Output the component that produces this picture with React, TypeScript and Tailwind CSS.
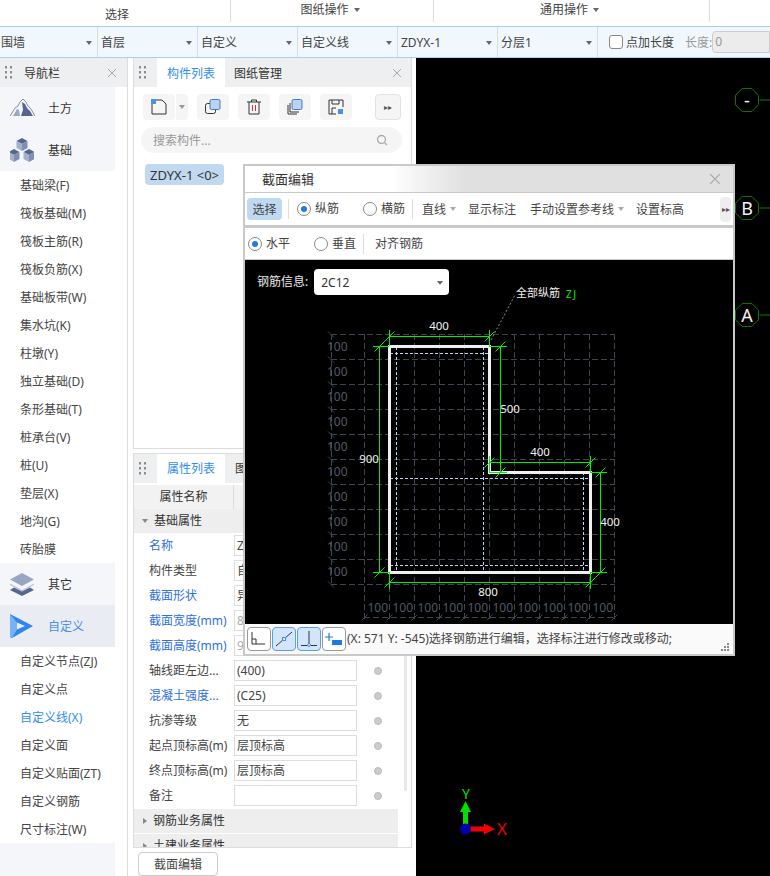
import type { ReactNode } from "react";

const selects = ["围墙", "首层", "自定义", "自定义线", "ZDYX-1", "分层1"];
const groupOne = ["基础梁(F)", "筏板基础(M)", "筏板主筋(R)", "筏板负筋(X)", "基础板带(W)", "集水坑(K)", "柱墩(Y)", "独立基础(D)", "条形基础(T)", "桩承台(V)", "桩(U)", "垫层(X)", "地沟(G)", "砖胎膜"];
const groupTwo = ["自定义节点(ZJ)", "自定义点", "自定义线(X)", "自定义面", "自定义贴面(ZT)", "自定义钢筋", "尺寸标注(W)"];
const props = [
  { name: "名称", value: "ZDYX-1", blue: true },
  { name: "构件类型", value: "自定义线" },
  { name: "截面形状", value: "异形", blue: true },
  { name: "截面宽度(mm)", value: "800", blue: true, muted: true },
  { name: "截面高度(mm)", value: "900", blue: true, muted: true },
  { name: "轴线距左边...", value: "(400)" },
  { name: "混凝土强度...", value: "(C25)", blue: true },
  { name: "抗渗等级", value: "无" },
  { name: "起点顶标高(m)", value: "层顶标高" },
  { name: "终点顶标高(m)", value: "层顶标高" },
  { name: "备注", value: "" },
];

function Caret({ className = "" }: { className?: string }) {
  return <span className={`inline-block h-0 w-0 border-x-[3.5px] border-t-[4px] border-x-transparent border-t-[#666] ${className}`} />;
}

function Grip() {
  return (
    <svg width="8" height="14" viewBox="0 0 8 14" fill="#8d8d8d">
      {[0, 5, 10].map((y) => (
        <g key={y}>
          <rect x="0" y={y} width="2" height="2.5" />
          <rect x="5" y={y} width="2" height="2.5" />
        </g>
      ))}
    </svg>
  );
}

function CloseX({ size = 10 }: { size?: number }) {
  return (
    <svg width={size} height={size} viewBox="0 0 10 10" stroke="#a8a8a8" strokeWidth="1">
      <path d="M1 1l8 8M9 1l-8 8" />
    </svg>
  );
}

function Radio({ label, on, className = "" }: { label: string; on?: boolean; className?: string }) {
  return (
    <span className={`flex items-center gap-1 ${className}`}>
      <span className="flex h-3.5 w-3.5 items-center justify-center rounded-full border border-[#8a8a8a] bg-white">
        {on ? <span className="h-1.5 w-1.5 rounded-full bg-[#1f7ae0]" /> : null}
      </span>
      <span>{label}</span>
    </span>
  );
}

function ToolButton({ children, className = "" }: { children: ReactNode; className?: string }) {
  return <span className={`flex h-[26px] w-8 items-center justify-center rounded bg-[#f5f5f5] ${className}`}>{children}</span>;
}

function NavHead({ icon, label, active }: { icon: ReactNode; label: string; active?: boolean }) {
  return (
    <div className={`flex h-[42px] w-[115px] items-center pl-2.5 ${active ? "bg-[#e9ecf3] text-[#4a90e8]" : "bg-[#f5f6fa] text-[#333]"}`}>
      <span className="flex w-[38px]">{icon}</span>
      <span className="pt-0.5">{label}</span>
    </div>
  );
}

function NavItem({ label, active }: { label: string; active?: boolean }) {
  return <div className={`flex h-7 items-center pl-5 pt-0.5 ${active ? "text-[#2f8ef0]" : "text-[#444]"}`}>{label}</div>;
}

function Mountain() {
  return (
    <svg width="25" height="18" viewBox="0 0 25 18">
      <path d="M0 17L5 9l3-2 2-4 3-3 3 3 2 4 3 3 4 7" fill="none" stroke="#7f8fb0" strokeWidth="1" />
      <path d="M12 3l3 2 2 4 3 3 3 5H11l2-6z" fill="#55678f" />
      <path d="M3 17l4-7 2 1 1 6z" fill="#9aa8c6" />
    </svg>
  );
}

function Cubes() {
  return (
    <svg width="24" height="24" viewBox="0 0 24 24">
      {[[12, 0], [4, 11], [19, 11]].map(([x, y]) => (
        <g key={`${x}-${y}`} transform={`translate(${x - 5.5} ${y})`}>
          <path d="M0 3l5.5-3L11 3 5.500 6z" fill="#55678f" />
          <path d="M0 3l5.500 3v7L0 10z" fill="#a4b1cd" />
          <path d="M11 3L5.500 6v7L11 10z" fill="#7e8fb3" />
        </g>
      ))}
    </svg>
  );
}

function Layers() {
  return (
    <svg width="24" height="23" viewBox="0 0 24 23">
      <path d="M12 0l12 6.500L12 13 0 6.500z" fill="#98a6c6" />
      <path d="M0 10.500L12 17l12-6.500V12l-12 6.500L0 12z" fill="#bcc6da" />
      <path d="M4 14.500l8 4 8-4 4 2.500-12 6-12-6z" fill="#55678f" />
    </svg>
  );
}

function PlayLogo() {
  return (
    <svg width="24" height="24" viewBox="0 0 24 24">
      <path d="M0 0l23 12L2 24l-2-1z" fill="#2f86ee" />
      <path d="M7 8.500v7l8-3.500z" fill="#e9ecf3" />
      <path d="M0 0l7 8.500v7L2 24l-2-1z" fill="#76b2f5" />
    </svg>
  );
}

function SectionDrawing() {
  const rows = Array.from({ length: 11 }, (_, i) => 334.5 + i * 25);
  const cols = Array.from({ length: 11 }, (_, i) => 364.5 + i * 25);
  const ticks: [number, number][] = [
    [389.5, 336.5], [489.5, 336.5], [379.5, 346.5], [379.5, 572.5], [500.5, 346.5], [500.5, 472.5],
    [489.5, 462.5], [590.5, 462.5], [600.5, 472.5], [600.5, 572.5], [389.5, 582.5], [590.5, 582.5],
  ];
  const green = [
    "M389.5 336.5H489.5", "M379.5 346.5V572.5", "M500.5 346.5V472.5", "M489.5 462.5H590.5", "M600.5 472.5V572.5", "M389.5 582.5H590.5",
    "M389.5 330V346", "M489.5 330V346", "M373 346.5H389", "M373 572.5H389", "M489 346.5H507", "M489.5 456V472", "M590.5 456V472",
    "M489 472.5H507", "M590 472.5H607", "M590 572.5H607", "M389.5 572V589", "M590.5 572V589",
  ];
  const dims: [string, number, number][] = [
    ["400", 439, 330], ["500", 510, 413], ["900", 369, 463], ["400", 540, 456], ["400", 610, 526], ["800", 488, 596],
  ];
  return (
    <svg className="absolute inset-0" width="488" height="364" viewBox="245 260 488 364">
      <g stroke="#3f4653" strokeWidth="1" strokeDasharray="6 3" fill="none">
        {rows.map((y) => <path key={y} d={`M331 ${y}H615`} />)}
        {cols.map((x) => <path key={x} d={`M${x} 334V620`} />)}
        <path d="M331.5 334V584" />
        <path d="M364 617.5H615" />
      </g>
      <g stroke="#3f4653" strokeWidth="1">
        {rows.map((y) => <path key={y} d={`M328 ${y - 3}l6 6`} />)}
        {cols.map((x) => <path key={x} d={`M${x - 3} 620.5l6-6`} />)}
      </g>
      <g fill="#535a66" fontSize="12">
        {rows.slice(0, 10).map((y) => <text key={y} x="327" y={y + 16.5}>100</text>)}
        {cols.slice(0, 10).map((x) => <text key={x} x={x + 3} y="612">100</text>)}
      </g>
      <g stroke="#bcd6f5" strokeWidth="1" strokeDasharray="3 2" fill="none">
        <path d="M396.5 347V572M483.5 347V572M583.5 472V572M390 353.5H489M390 478.5H590M390 565.5H590" />
      </g>
      <path d="M389.5 346.5H489.5V472.5H590.5V572.5H389.5Z" fill="none" stroke="#f0f0f0" strokeWidth="3" />
      <g stroke="#00f000" strokeWidth="1" fill="none">
        {green.map((d) => <path key={d} d={d} />)}
        {ticks.map(([x, y]) => <path key={`${x}-${y}`} d={`M${x - 5} ${y + 5}L${x + 5} ${y - 5}`} />)}
      </g>
      <path d="M491 340L515 295" stroke="#8a8a8a" strokeWidth="1" strokeDasharray="2 2" />
      <g fill="#f2f2f2" fontSize="11.5" textAnchor="middle">
        {dims.map(([t, x, y]) => <text key={`${x}-${y}`} x={x} y={y}>{t}</text>)}
      </g>
      <text x="516" y="297" fill="#f0f0f0" fontSize="11">全部纵筋</text>
      <text x="566" y="298" fill="#00f000" fontSize="10" letterSpacing="1.5">ZJ</text>
    </svg>
  );
}

function SectionDialog() {
  return (
    <div className="absolute left-[243px] top-[164px] flex h-[492px] w-[492px] flex-col border-2 border-[#c9c9c9] bg-[#c9c9c9] text-[#444]">
      <div className="flex h-[26px] shrink-0 items-center justify-between bg-gradient-to-r from-white from-[30%] to-[#e0e0e0] to-[45%] pl-[17px] pr-3 text-[13px] text-[#333]">
        <span className="pt-px">截面编辑</span>
        <CloseX size={12} />
      </div>
      <div className="mt-px flex h-8 shrink-0 items-center bg-white pl-0.5">
        <span className="flex h-[22px] w-[35px] items-center justify-center rounded-sm bg-[#bfd9f2] pt-0.5">选择</span>
        <span className="ml-1.5 h-5 w-px bg-[#ddd]" />
        <Radio label="纵筋" on className="ml-2" />
        <Radio label="横筋" className="ml-6" />
        <span className="ml-[7px] h-5 w-px bg-[#ddd]" />
        <span className="ml-[9px] pt-px">直线</span>
        <Caret className="ml-1 border-t-[#aaa]" />
        <span className="ml-3 pt-0.5">显示标注</span>
        <span className="ml-3.5 pt-0.5">手动设置参考线</span>
        <Caret className="ml-1 border-t-[#aaa]" />
        <span className="ml-3 pt-0.5">设置标高</span>
        <span className="ml-auto mr-0.5 flex h-[25px] w-[11px] items-center justify-center rounded-sm bg-[#eee] text-[8px] text-[#555]">▸▸</span>
      </div>
      <div className="mt-[3px] flex h-[31px] shrink-0 items-center bg-white pl-[3px]">
        <Radio label="水平" on />
        <Radio label="垂直" className="ml-6" />
        <span className="ml-[7px] h-5 w-px bg-[#ddd]" />
        <span className="ml-[11px]">对齐钢筋</span>
      </div>
      <div className="relative mt-px h-[364px] shrink-0 bg-black">
        <SectionDrawing />
        <div className="relative flex items-center pl-3 pt-[9px] text-[#e8e8e8]">
          <span>钢筋信息:</span>
          <span className="ml-1.5 flex h-[26px] w-[135px] items-center justify-between rounded bg-white pl-[7px] pr-[6px] pt-px text-[#333]">
            2C12
            <Caret />
          </span>
        </div>
      </div>
      <div className="flex h-[30px] items-center bg-[#fafafa] pl-0.5">
        <span className="flex h-6 w-6 items-center justify-center rounded border border-[#999] bg-white">
          <svg width="16" height="14" viewBox="0 0 16 14" stroke="#333" fill="none"><path d="M1 0V12H14M1 7H5V12" /></svg>
        </span>
        <span className="ml-px flex h-6 w-6 items-center justify-center rounded border border-[#5a9fe8] bg-[#d3e5fa]">
          <svg width="18" height="16" viewBox="0 0 18 16" stroke="#333" fill="none"><path d="M1 15L17 1" /><rect x="7.5" y="6.5" width="3" height="3" fill="#d3e5fa" stroke="#4a90e8" /></svg>
        </span>
        <span className="ml-px flex h-6 w-6 items-center justify-center rounded border border-[#5a9fe8] bg-[#d3e5fa]">
          <svg width="18" height="16" viewBox="0 0 18 16" stroke="#333" fill="none"><path d="M9 0V14M1 14.5H17" /><circle cx="9" cy="14" r="1.5" fill="#d3e5fa" stroke="#4a90e8" /></svg>
        </span>
        <span className="ml-px flex h-6 w-6 items-center justify-center rounded border border-[#999] bg-white">
          <svg width="18" height="14" viewBox="0 0 18 14"><path d="M4 1V9M0 5H8" stroke="#1f7ae0" strokeWidth="1.2" /><rect x="7" y="8" width="10" height="5" fill="#1f7ae0" /></svg>
        </span>
        <span className="ml-px whitespace-nowrap">(X: 571 Y: -545)选择钢筋进行编辑，选择标注进行修改或移动;</span>
        <svg className="ml-auto mr-1 mt-4" width="8" height="8" viewBox="0 0 8 8" fill="#888">
          <rect x="6" y="0" width="2" height="2" /><rect x="3" y="3" width="2" height="2" /><rect x="6" y="3" width="2" height="2" />
          <rect x="0" y="6" width="2" height="2" /><rect x="3" y="6" width="2" height="2" /><rect x="6" y="6" width="2" height="2" />
        </svg>
      </div>
    </div>
  );
}

function AxisCanvas() {
  const octagon = (cx: number, cy: number) => {
    const r = 12.5;
    const pts = Array.from({ length: 8 }, (_, i) => {
      const a = Math.PI / 8 + (i * Math.PI) / 4;
      return `${cx + r * Math.cos(a)},${cy + r * Math.sin(a)}`;
    });
    return pts.join(" ");
  };
  const axes: [string, number, number][] = [["-", 747, 100], ["B", 747, 208], ["A", 747, 315]];
  return (
    <svg className="h-full w-full" viewBox="416 58 354 818">
      {axes.map(([t, x, y]) => (
        <g key={y}>
          <polygon points={octagon(x, y)} fill="none" stroke="#0b7a0b" />
          <path d={`M${x + 12.5} ${y}H770`} stroke="#0b7a0b" />
          <text x={x} y={y + 6.5} textAnchor="middle" fontSize="18" fill="#f0f0f0">{t}</text>
        </g>
      ))}
      <path d="M463 829V812h-3l5.500-11 5.500 11h-3V829z" fill="#00e000" />
      <path d="M466 826.500H484v-3l11 5.500-11 5.500v-3H466z" fill="#f00000" />
      <circle cx="465.5" cy="829" r="5.5" fill="#0000a8" />
      <text x="466" y="799" textAnchor="middle" fontSize="14" fill="#00e000">Y</text>
      <text x="502" y="835" textAnchor="middle" fontSize="17" fill="#f00000">X</text>
    </svg>
  );
}

export default function App() {
  return (
    <div className="relative h-[876px] w-[770px] overflow-hidden bg-white font-['Noto_Sans','Noto_Sans_CJK_SC',sans-serif] text-xs leading-none text-[#444]">
      <div className="flex h-[26px] text-[#444]">
        <div className="flex h-[22px] w-[231px] justify-center border-r border-[#ddd] pl-1 pt-[9px]">选择</div>
        <div className="flex h-[22px] w-[203px] items-center justify-center gap-[5px] border-r border-[#ddd] pb-[3px] pr-1">
          图纸操作 <Caret />
        </div>
        <div className="flex h-[22px] w-[276px] items-center justify-center gap-[5px] border-r border-[#ddd] pb-[3px] pr-1">
          通用操作 <Caret />
        </div>
      </div>
      <div className="flex h-8 items-center border-y border-[#a3d0f5] bg-[#f0f8fd]">
        {selects.map((s, i) => (
          <div key={s} className={`flex h-full items-center justify-between border-r border-[#d5dde4] pr-[5px] pt-px ${i === 0 ? "w-[98px] pl-px" : "w-[100px] pl-[3px]"}`}>
            <span>{s}</span>
            <Caret />
          </div>
        ))}
        <span className="ml-[11px] h-3.5 w-3.5 rounded-[3px] border border-[#888] bg-white" />
        <span className="ml-[3px] pt-px">点加长度</span>
        <span className="ml-[11px] pt-px text-[#999]">长度:</span>
        <span className="flex h-[22px] flex-1 items-center rounded-l border border-[#ccc] bg-[#ececec] pl-0.5 text-[#999]">0</span>
      </div>

      <div className="flex h-[818px]">
        <aside className="flex w-[128px] shrink-0 flex-col border-r border-[#ddd]">
          <div className="flex h-[29px] shrink-0 items-center bg-[#eeeff1] pl-[5px] pr-[10px]">
            <Grip />
            <span className="ml-[11px] flex-1 pt-0.5 text-[#333]">导航栏</span>
            <CloseX />
          </div>
          <NavHead icon={<Mountain />} label="土方" />
          <NavHead icon={<Cubes />} label="基础" />
          {groupOne.map((g) => <NavItem key={g} label={g} />)}
          <NavHead icon={<Layers />} label="其它" />
          <NavHead icon={<PlayLogo />} label="自定义" active />
          {groupTwo.map((g) => <NavItem key={g} label={g} active={g === "自定义线(X)"} />)}
          <div className="w-[115px] flex-1 bg-[#f5f6fa]" />
        </aside>
        <div className="ml-[5px] flex w-[279px] shrink-0 flex-col">
          <section className="flex h-[391px] flex-col border border-t-0 border-[#ddd]">
            <div className="flex h-[29px] shrink-0 items-center bg-[#eeeff1] pl-[5px] pr-[9px]">
              <Grip />
              <span className="ml-[10px] flex h-full w-[68px] items-center justify-center bg-white pt-0.5 text-[#2f8ef0]">构件列表</span>
              <span className="ml-[9px] flex-1 pt-0.5 text-[#333]">图纸管理</span>
              <CloseX />
            </div>
            <div className="ml-[9px] mt-[7px] flex items-center">
              <ToolButton>
                <svg width="16" height="16" viewBox="0 0 16 16" fill="none" stroke="#333">
                  <path d="M1 5V15H15V5L11 1H4" />
                  <rect x="0" y="0" width="5" height="5" fill="#4a90e8" stroke="none" />
                </svg>
              </ToolButton>
              <span className="ml-px flex h-[26px] w-3 items-center justify-center rounded-r bg-[#f5f5f5]"><Caret className="border-t-[#999]" /></span>
              <ToolButton className="ml-[9px]">
                <svg width="16" height="16" viewBox="0 0 16 16" fill="none" stroke="#333">
                  <rect x="0.5" y="4.5" width="10" height="10" rx="2" />
                  <rect x="5" y="0.5" width="10" height="10" rx="1.5" fill="#b9d3f2" stroke="#4a78b8" />
                </svg>
              </ToolButton>
              <ToolButton className="ml-[9px]">
                <svg width="14" height="16" viewBox="0 0 14 16" fill="none" stroke="#333">
                  <path d="M0 3H14M4.500 3V1H9.500V3M2 3V15H12V3" />
                  <path d="M5.500 6V12M8.500 6V12" stroke="#e03030" />
                </svg>
              </ToolButton>
              <ToolButton className="ml-[9px]">
                <svg width="16" height="16" viewBox="0 0 16 16" fill="none" stroke="#333">
                  <path d="M1 6V15H10M3 4V13H12" />
                  <rect x="5" y="0.5" width="10" height="10" rx="1.5" fill="#b9d3f2" stroke="#4a78b8" />
                </svg>
              </ToolButton>
              <ToolButton className="ml-[9px]">
                <svg width="16" height="16" viewBox="0 0 16 16" fill="none" stroke="#333">
                  <path d="M8 15H1V1H15V8M4 1V5H11V1M4 15V9H8" />
                  <rect x="10" y="10" width="5" height="5" fill="#4a90e8" stroke="none" />
                </svg>
              </ToolButton>
              <span className="ml-[23px] flex h-[26px] w-[26px] items-center justify-center rounded border border-[#e2e2e2] bg-[#f5f5f5] text-[8px] text-[#555]">▸▸</span>
            </div>
            <div className="ml-[7px] mr-[9px] mt-[7px] flex h-[26px] items-center justify-between rounded-full bg-[#f5f5f5] pl-3 pr-[14px] text-[#999]">
              <span className="pt-px">搜索构件...</span>
              <svg width="12" height="12" viewBox="0 0 12 12" fill="none" stroke="#aaa" strokeWidth="1.3"><circle cx="5.5" cy="5.5" r="4" /><path d="M8.500 8.500L11 11" /></svg>
            </div>
            <span className="ml-[11px] mt-[11px] flex h-[21px] w-[79px] items-center justify-center whitespace-pre rounded-sm bg-[#c0d8f0] pt-px text-[13px] text-[#333]">ZDYX-1 &lt;0&gt;</span>
          </section>

          <section className="mt-1 flex h-[395px] flex-col overflow-hidden border border-[#ddd]">
            <div className="flex h-[29px] shrink-0 items-center bg-[#eeeff1] pl-[5px]">
              <Grip />
              <span className="ml-[10px] flex h-full w-[68px] items-center justify-center bg-white text-[#2f8ef0]">属性列表</span>
              <span className="ml-2.5 text-[#333]">图纸管理</span>
            </div>
            <div className="mt-0.5 flex h-6 w-[264px] shrink-0 bg-[#f2f2f2] text-[#333]">
              <span className="flex w-[100px] items-center justify-center border-r border-[#ddd]">属性名称</span>
            </div>
            <div className="flex h-6 w-[264px] shrink-0 items-center bg-[#eee] pl-2 text-[#333]">
              <Caret className="border-t-[#888]" />
              <span className="ml-[6px]">基础属性</span>
            </div>
            <div className="relative shrink-0">
              {props.map((p) => (
                <div key={p.name} className="flex h-[25px] items-center pl-[15px]">
                  <span className={`w-[85px] shrink-0 whitespace-nowrap ${p.blue ? "text-[#2f6fe0]" : "text-[#444]"}`}>{p.name}</span>
                  <span className={`flex h-[21px] w-[123px] items-center border border-[#ddd] bg-white pl-0.5 ${p.muted ? "text-[#aaa]" : "text-[#444]"}`}>{p.value}</span>
                  <span className="ml-[17px] h-2 w-2 rounded-full border border-[#bbb] bg-[#ccc]" />
                </div>
              ))}
              <span className="absolute right-[4px] top-0 h-[258px] w-[3px] rounded bg-[#e8e8e8]" />
            </div>
            <div className="mt-px flex h-6 w-[264px] shrink-0 items-center bg-[#eee] pl-[9px] text-[#333]">
              <span className="h-0 w-0 border-y-[3.5px] border-l-[4px] border-y-transparent border-l-[#888]" />
              <span className="ml-[6px]">钢筋业务属性</span>
            </div>
            <div className="mt-px flex h-6 w-[264px] shrink-0 items-center bg-[#eee] pl-[9px] text-[#333]">
              <span className="h-0 w-0 border-y-[3.5px] border-l-[4px] border-y-transparent border-l-[#888]" />
              <span className="ml-[6px]">土建业务属性</span>
            </div>
          </section>
          <button type="button" className="ml-[5px] mt-1 flex h-6 w-20 shrink-0 items-center justify-center rounded border border-[#ccc] bg-white pt-0.5 text-[#444]">截面编辑</button>
        </div>
        <div className="ml-1 flex-1 bg-black">
          <AxisCanvas />
        </div>
      </div>
      <SectionDialog />
    </div>
  );
}
